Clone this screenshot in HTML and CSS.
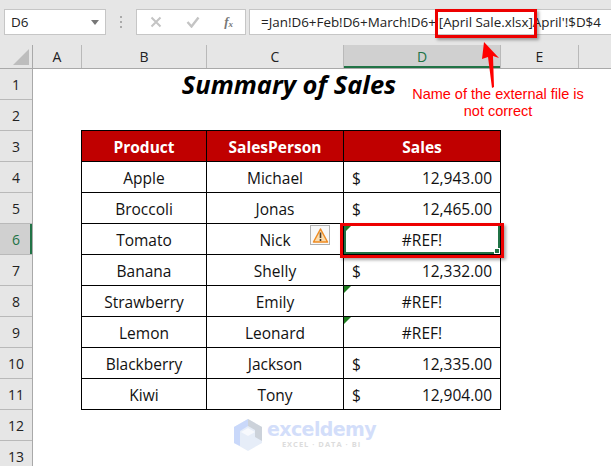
FILE: index.html
```html
<!DOCTYPE html>
<html lang="en">
<head>
<meta charset="utf-8">
<title>Summary of Sales</title>
<link rel="stylesheet" href="styles.css">
</head>
<body>
<div class="app">
  <div class="fbar">
    <div class="namebox"><span>D6</span><i class="caret"></i></div>
    <div class="dots"><i></i><i></i><i></i></div>
    <div class="btnbox">
      <svg class="ic" width="12" height="12" viewBox="0 0 12 12"><path d="M1.500 1.500l9 9M10.500 1.500l-9 9" stroke="#c4c4c4" stroke-width="2" fill="none"/></svg>
      <svg class="ic" width="14" height="12" viewBox="0 0 14 12"><path d="M1.500 6l4 4.500L12.500 1.500" stroke="#c4c4c4" stroke-width="2.400" fill="none"/></svg>
      <span class="fx">f<sub>x</sub></span>
    </div>
    <div class="formula">=Jan!D6+Feb!D6+March!D6+'[April Sale.xlsx]April'!$D$4</div>
  </div>
  <div class="colheads">
    <div class="corner"><i></i></div>
    <div class="ch a">A</div>
    <div class="ch b">B</div>
    <div class="ch c">C</div>
    <div class="ch d sel">D</div>
    <div class="ch e">E</div>
    <div class="ch f"></div>
  </div>
  <div class="sheet">
    <div class="rowheads">
      <div class="rh">1</div><div class="rh">2</div><div class="rh">3</div><div class="rh">4</div><div class="rh">5</div>
      <div class="rh sel">6</div>
      <div class="rh">7</div><div class="rh">8</div><div class="rh">9</div><div class="rh">10</div><div class="rh">11</div><div class="rh">12</div><div class="rh">13</div>
    </div>
    <div class="cells">
      <h1 class="title">Summary of Sales</h1>
      <div class="tbl">
        <div class="c hd">Product</div><div class="c hd">SalesPerson</div><div class="c hd">Sales</div>
        <div class="c">Apple</div><div class="c">Michael</div><div class="c acc"><span>$</span><span>12,943.00</span></div>
        <div class="c">Broccoli</div><div class="c">Jonas</div><div class="c acc"><span>$</span><span>12,465.00</span></div>
        <div class="c">Tomato</div>
        <div class="c warnc">Nick
          <span class="warn"><svg width="17" height="17" viewBox="0 0 17 17"><path d="M8.500 2L15.500 15H1.500z" fill="#fbdcae" stroke="#ee8b22" stroke-width="1.500" stroke-linejoin="round"/><path d="M8.500 5.500v5.500M8.500 12v2" stroke="#4a3a28" stroke-width="1.600"/></svg></span>
        </div>
        <div class="c err active">#REF!</div>
        <div class="c">Banana</div><div class="c">Shelly</div><div class="c acc"><span>$</span><span>12,332.00</span></div>
        <div class="c">Strawberry</div><div class="c">Emily</div><div class="c err tri">#REF!</div>
        <div class="c">Lemon</div><div class="c">Leonard</div><div class="c err tri">#REF!</div>
        <div class="c">Blackberry</div><div class="c">Jackson</div><div class="c acc"><span>$</span><span>12,335.00</span></div>
        <div class="c">Kiwi</div><div class="c">Tony</div><div class="c acc"><span>$</span><span>12,904.00</span></div>
      </div>
    </div>
  </div>
  <div class="redbox rb-formula"></div>
  <div class="redbox rb-cell"></div>
  <svg class="arrow" width="30" height="48" viewBox="0 0 30 48"><path d="M13 0L11 17l6-2 4 31 2-1-1-31 6 2z" fill="#f00"/></svg>
  <div class="note">Name of the external file is<br>not correct</div>
  <div class="wm">
    <svg width="30" height="34" viewBox="0 0 30 34"><path d="M15 1L29 9v16L15 33 1 25V9z" fill="#e6edf8"/><path d="M15 1L1 9v16l6 3V13l8-5z" fill="#c9d8fa"/><path d="M15 1l14 8v14l-7-4V12l-7-4z" fill="#ccd2da"/><path d="M15 10l7 4-7 4-7-4z" fill="#f7f9fd"/></svg>
    <div class="wmt"><b>exceldemy</b><span>EXCEL · DATA · BI</span></div>
  </div>
</div>
</body>
</html>
```
FILE: styles.css
```css
*{box-sizing:border-box}
html,body{margin:0;padding:0;background:#fff}
.app{position:relative;width:611px;height:466px;overflow:hidden;font-family:"Open Sans",sans-serif;color:#000}
.fbar{height:45px;background:#e6e6e6;display:flex;align-items:flex-start;padding:9px 0 0 4px}
.namebox{width:102px;height:26px;background:#fff;border:1px solid #c6c6c6;display:flex;align-items:center;justify-content:space-between;padding:0 6px;font-size:13.500px;color:#222}
.caret{border:4px solid transparent;border-top:5px solid #777;border-bottom:0}
.dots{width:30px;height:26px;display:flex;flex-direction:column;align-items:center;justify-content:center;gap:3px}
.dots i{width:2px;height:2px;background:#aaa}
.btnbox{width:110px;height:26px;background:#fff;border:1px solid #c6c6c6;display:flex;align-items:center;justify-content:space-between;padding:0 12px 0 13px}
.fx{font:italic 700 13px "Liberation Serif",serif;color:#777}
.fx sub{font-size:9px;vertical-align:-1px}
.formula{flex:1;height:26px;margin-left:3px;background:#fff;border:1px solid #c6c6c6;border-right:0;padding-left:11px;font-size:13.400px;line-height:24px;color:#222;white-space:nowrap;overflow:hidden}
.colheads{height:24px;background:#e6e6e6;display:flex;border-bottom:1px solid #a9a9a9}
.corner{width:33px;position:relative;border-right:1px solid #a9a9a9}
.corner i{position:absolute;right:3px;bottom:3px;border-style:solid;border-width:0 0 16px 16px;border-color:transparent transparent #bdbdbd transparent}
.ch{font-size:14px;line-height:23px;text-align:center;border-right:1px solid #b9b9b9;color:#222}
.a{width:49px}.b{width:125px}.ch.c{width:137px}.d{width:157px}.e{width:78px}.f{flex:1;border:0}
.ch.sel{background:#d0d0d0;color:#217346;box-shadow:inset 0 -2px #217346}
.sheet{display:flex}
.rowheads{width:33px;background:#e6e6e6;border-right:1px solid #a9a9a9;flex:none}
.rh{height:31px;font-size:14px;line-height:31px;text-align:center;border-bottom:1px solid #b9b9b9;color:#222}
.rh.sel{background:#d0d0d0;color:#217346;box-shadow:inset -2px 0 #217346}
.cells{flex:1;position:relative;height:397px;background:#fff}
.title{margin:0 0 30px 47px;width:418px;height:31px;text-align:center;font-size:25.500px;line-height:31px;font-style:italic;font-weight:700;color:#000}
.tbl{margin-left:48px;display:grid;grid-template-columns:125px 137px 157px;grid-auto-rows:31px;border-top:1px solid #000;border-left:1px solid #000;width:max-content}
.tbl .c{border-right:1px solid #000;border-bottom:1px solid #000;font-size:15.500px;padding-top:1px;display:flex;align-items:center;justify-content:center;color:#111;position:relative}
.tbl .hd{background:#c00000;color:#fff;font-weight:700}
.tbl .acc{justify-content:space-between;padding:1px 8px 0}
.warn{position:absolute;right:13px;top:1px;width:20px;height:20px;border:1px solid #b0b0b0;display:flex;align-items:center;justify-content:center;background:#f8f8f8}
.active{box-shadow:inset 0 0 0 2px #217346}
.tri::before,.active::before{content:"";position:absolute;left:0;top:0;border-style:solid;border-width:7px 7px 0 0;border-color:#1e7d1e transparent transparent transparent}
.active::before{left:2px;top:2px;border-width:5px 5px 0 0}
.active::after{content:"";position:absolute;right:0;bottom:0;width:4px;height:4px;background:#217346;border:1px solid #fff}
.redbox{position:absolute;border:3px solid #ed0000;box-shadow:2px 2px 3px rgba(0,0,0,.35)}
.rb-formula{left:435px;top:9px;width:102px;height:29px}
.rb-cell{left:340px;top:223px;width:164px;height:35px}
.arrow{position:absolute;left:471px;top:42px}
.note{position:absolute;left:398px;top:86px;width:200px;text-align:center;font:14.500px/17px "Liberation Sans",sans-serif;color:#f00}
.wm{position:absolute;left:233px;top:418px;display:flex;gap:4px}
.wmt{display:flex;flex-direction:column;align-items:center}
.wmt b{font:700 19px/22px "DejaVu Sans",sans-serif;color:#d3defa;letter-spacing:-.6px}
.wmt span{font:700 7.500px/9px "Open Sans",sans-serif;color:#dcdcdc;letter-spacing:1px}
```
